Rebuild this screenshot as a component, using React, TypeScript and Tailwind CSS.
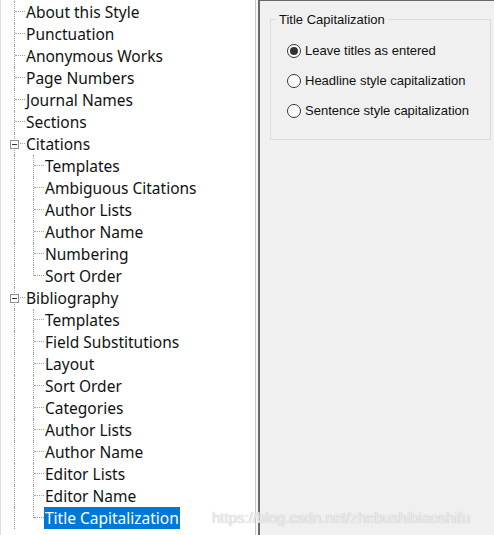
import React from "react";

type Node = { label: string; level: 0 | 1; expander?: boolean; selected?: boolean };

const rows: Node[] = [
  { label: "About this Style", level: 0 },
  { label: "Punctuation", level: 0 },
  { label: "Anonymous Works", level: 0 },
  { label: "Page Numbers", level: 0 },
  { label: "Journal Names", level: 0 },
  { label: "Sections", level: 0 },
  { label: "Citations", level: 0, expander: true },
  { label: "Templates", level: 1 },
  { label: "Ambiguous Citations", level: 1 },
  { label: "Author Lists", level: 1 },
  { label: "Author Name", level: 1 },
  { label: "Numbering", level: 1 },
  { label: "Sort Order", level: 1 },
  { label: "Bibliography", level: 0, expander: true },
  { label: "Templates", level: 1 },
  { label: "Field Substitutions", level: 1 },
  { label: "Layout", level: 1 },
  { label: "Sort Order", level: 1 },
  { label: "Categories", level: 1 },
  { label: "Author Lists", level: 1 },
  { label: "Author Name", level: 1 },
  { label: "Editor Lists", level: 1 },
  { label: "Editor Name", level: 1 },
  { label: "Title Capitalization", level: 1, selected: true },
];

function TreeRow({ node, last }: { node: Node; last: boolean }) {
  return (
    <div className="flex h-[22px] items-stretch">
      {/* root guide line */}
      <div className="relative w-[14px] shrink-0 border-r border-dotted border-[#a0a0a0]">
        {node.expander && (
          <div className="absolute left-[9px] top-[7px] w-[9px] h-[9px] border border-[#919191] bg-white flex items-center justify-center">
            <div className="w-[5px] h-px bg-[#333]" />
          </div>
        )}
      </div>
      {node.level === 1 && (
        <div
          className={`w-[19px] shrink-0 border-r border-dotted border-[#a0a0a0] ${last ? "h-[11px]" : ""}`}
        />
      )}
      <div className="w-[10px] h-[11px] shrink-0 border-b border-dotted border-[#a0a0a0]" />
      <span
        className={`px-[1px] leading-[22px] text-[15.5px] whitespace-nowrap ${
          node.selected ? "bg-[#0078d7] text-white" : "text-[#111]"
        }`}
      >
        {node.label}
      </span>
    </div>
  );
}

function Radio({ label, checked }: { label: string; checked?: boolean }) {
  return (
    <div className="flex items-center gap-[4px] h-[30px]">
      <div className="w-[14px] h-[14px] rounded-full border border-[#333] bg-white flex items-center justify-center">
        {checked && <div className="w-[8px] h-[8px] rounded-full bg-[#333]" />}
      </div>
      <span className="text-[13px] text-[#111]">{label}</span>
    </div>
  );
}

export default function App() {
  return (
    <div className="relative w-[494px] h-[535px] flex overflow-hidden bg-[#f0f0f0] font-['Noto_Sans','Open_Sans',sans-serif]">
      <div className="w-[256px] h-full shrink-0 bg-white border-l border-[#e0e0e0] border-r border-r-[#c8c8c8] pt-[1px]">
        {rows.map((n, i) => (
          <TreeRow
            key={i}
            node={n}
            last={n.level === 1 && (!rows[i + 1] || rows[i + 1].level === 0)}
          />
        ))}
      </div>
      <div className="w-[2px] h-full shrink-0 bg-[#f7f7f7]" />
      <div className="flex-1 h-full border-l-2 border-t border-[#696969] pl-[10px] pr-[3px] pt-[18px] font-['Liberation_Sans','Arial',sans-serif]">
        <div className="relative border border-[#dcdcdc] h-[121px] pl-[16px] pt-[16px]">
          <span className="absolute -top-[8px] left-[5px] px-[3px] bg-[#f0f0f0] text-[13px] leading-[15px] text-[#111]">
            Title Capitalization
          </span>
          <Radio label="Leave titles as entered" checked />
          <Radio label="Headline style capitalization" />
          <Radio label="Sentence style capitalization" />
        </div>
      </div>
      <div className="absolute left-[212px] top-[507px] text-[15px] text-white/80 [text-shadow:0_0_1px_#9a9a9a] font-['Liberation_Sans',sans-serif]">
        https://blog.csdn.net/zhebushibiaoshifu
      </div>
    </div>
  );
}
